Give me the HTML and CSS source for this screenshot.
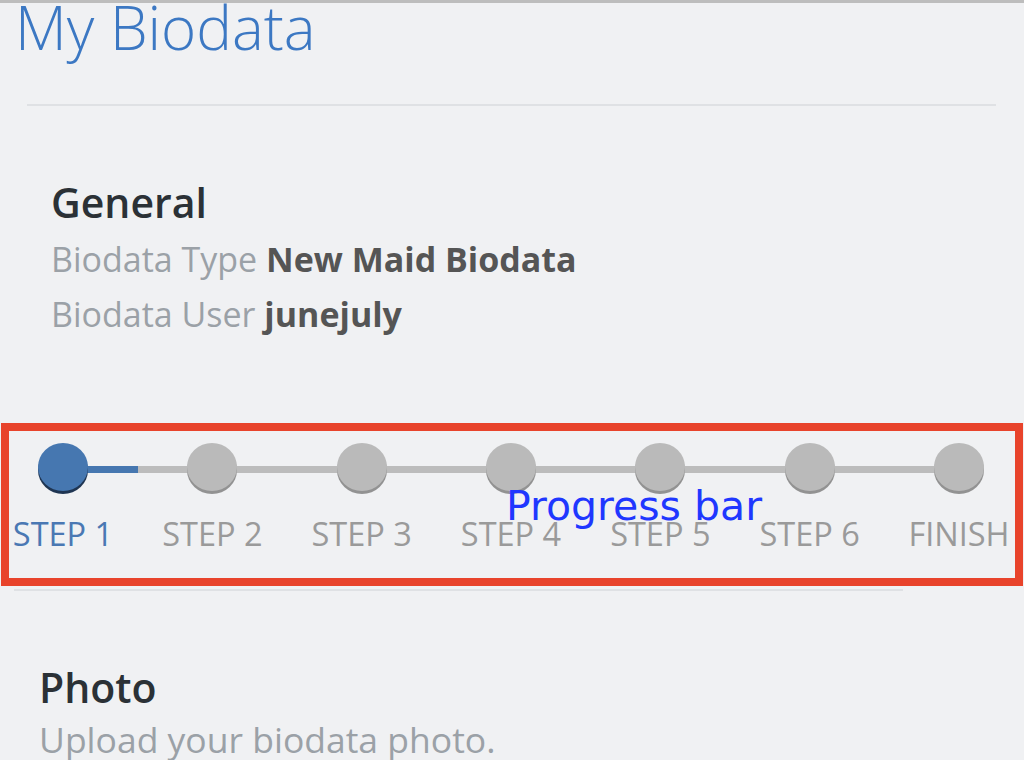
FILE: index.html
```html
<!DOCTYPE html>
<html lang="en">
<head>
    <meta charset="UTF-8">
    <meta name="viewport" content="width=device-width, initial-scale=1.0">
    <title>My Biodata</title>
    <link rel="stylesheet" href="styles.css">
</head>
<body>
    <div id="page">
        <h1 id="title">My Biodata</h1>
        <div class="rule rule-top"></div>

        <div id="general">
            <h2>General</h2>
            <p class="row">Biodata Type <b>New Maid Biodata</b></p>
            <p class="row">Biodata User <b>junejuly</b></p>
        </div>

        <div id="steps-box">
            <div class="track"><div class="track-fill"></div></div>
            <ul id="steps">
                <li class="active"><span class="dot"></span><span class="label">STEP 1</span></li>
                <li><span class="dot"></span><span class="label">STEP 2</span></li>
                <li><span class="dot"></span><span class="label">STEP 3</span></li>
                <li><span class="dot"></span><span class="label">STEP 4</span></li>
                <li><span class="dot"></span><span class="label">STEP 5</span></li>
                <li><span class="dot"></span><span class="label">STEP 6</span></li>
                <li><span class="dot"></span><span class="label">FINISH</span></li>
            </ul>
            <span id="note">Progress bar</span>
        </div>
        <div class="rule rule-bottom"></div>

        <div id="photo">
            <h2>Photo</h2>
            <p class="row">Upload your biodata photo.</p>
        </div>
    </div>
</body>
</html>
```

FILE: styles.css
```css
*{
    padding: 0;
    margin: 0;
}

body{
    background: #f0f1f3;
    font-family: "Open Sans", "Noto Sans", sans-serif;
    overflow: hidden;
}

#page{
    border-top: 3px solid #bdbdbd;
    height: 757px;
}

#title{
    font-size: 60px;
    font-weight: 300;
    line-height: 60px;
    color: #3c78c3;
    margin: -6px 0 0 15px;
}

.rule{
    height: 2px;
    background: #dfe1e4;
}

.rule-top{
    margin: 47px 28px 0 27px;
}

.rule-bottom{
    width: 889px;
    margin: 3px 0 0 14px;
}

h2{
    font-size: 41px;
    font-weight: 600;
    line-height: 48px;
    color: #2b3136;
}

.row{
    font-size: 34px;
    line-height: 55px;
    color: #9ba1a7;
}

.row b{
    color: #555;
    font-weight: 700;
}

#general{
    padding-left: 51px;
    margin-top: 72px;
}

#general h2{
    margin-bottom: 6px;
}

#steps-box{
    position: relative;
    margin: 81px 1px 0 1px;
    height: 135px;
    border: 8px solid #e8432b;
    padding: 12px 6px 0 4px;
}

.track{
    position: absolute;
    left: 54px;
    right: 56px;
    top: 35px;
    height: 7px;
    background: #bcbcbc;
}

.track-fill{
    width: 75px;
    height: 7px;
    background: #4677b0;
}

#steps{
    position: relative;
    display: flex;
    justify-content: space-between;
    list-style: none;
}

#steps li{
    width: 100px;
    display: flex;
    flex-direction: column;
    align-items: center;
}

.dot{
    width: 50px;
    height: 48px;
    border-radius: 50%;
    background: #bababa;
    box-shadow: 0 3px 0 #929292;
}

.label{
    margin-top: 25px;
    font-size: 32.5px;
    line-height: 36px;
    color: #9a9a9a;
    white-space: nowrap;
}

#steps li.active .dot{
    background: #4677b0;
    box-shadow: 0 3px 0 #1f3552;
}

#steps li.active .label{
    color: #4a78b3;
}

#note{
    position: absolute;
    left: 497px;
    top: 55px;
    font-family: "DejaVu Sans", sans-serif;
    font-size: 41px;
    line-height: 40px;
    color: #1f37ff;
}

#photo{
    padding-left: 39px;
    margin-top: 73px;
}

#photo h2{
    line-height: 46px;
    margin-bottom: 7px;
}

#photo .row{
    font-size: 35.5px;
    line-height: 44px;
}
```
